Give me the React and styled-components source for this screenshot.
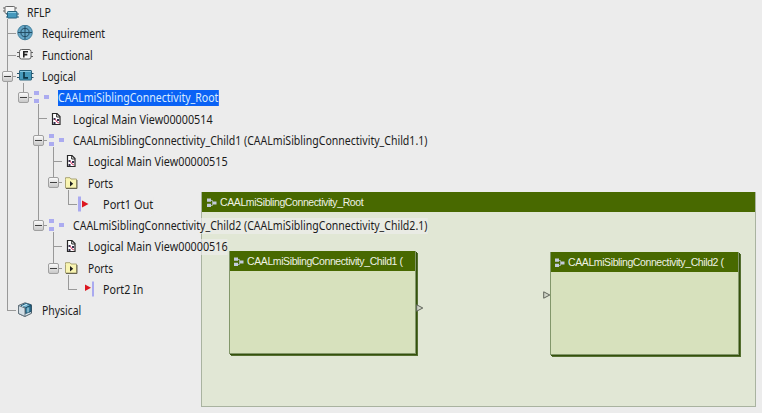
import React from "react";
import styled, { createGlobalStyle } from "styled-components";

const GlobalStyle = createGlobalStyle`
  * { box-sizing: border-box; }
  body { margin: 0; background: #ececec; overflow: hidden; }
`;

const Workspace = styled.main`
  display: grid;
  width: 762px;
  height: 413px;
  overflow: hidden;
  background: #ececec;
  > * { grid-area: 1 / 1; }
`;

/* ---------- specification tree ---------- */

const Tree = styled.nav`
  position: relative;
  z-index: 1;
  padding: 2px 0 0 0;
  font: 12px/16px "Noto Sans", sans-serif;
  color: #1c1c1c;
`;

const Children = styled.ul`
  margin: 0;
  padding: 0 0 0 15.3px;
  list-style: none;
`;

const Node = styled.li`
  position: relative;
  &::before {
    content: "";
    position: absolute;
    left: -8px;
    top: ${(p) => (p.$first ? "-4px" : "-1px")};
    height: ${(p) => (p.$last ? (p.$first ? "15px" : "12px") : "calc(100% + 4px)")};
    border-left: 1px solid #999;
  }
`;

const Row = styled.div`
  position: relative;
  display: flex;
  align-items: center;
  height: 21.3px;
  padding-left: 2px;
`;

const Connector = styled.span`
  position: absolute;
  left: -8px;
  top: 10px;
  width: 9px;
  border-top: 1px solid #999;
`;

const Expander = styled.span`
  position: absolute;
  left: -13px;
  top: 5px;
  display: grid;
  place-items: center;
  width: 11px;
  height: 11px;
  border: 1px solid #a0a0a0;
  border-radius: 2px;
  background: linear-gradient(#fafafa, #c8c8c8);
  &::after {
    content: "";
    width: 7px;
    height: 1px;
    background: #404040;
  }
`;

const IconSlot = styled.span`
  display: flex;
  flex: none;
  width: 25px;
  svg { display: block; }
`;

const Label = styled.span`
  flex: none;
  height: 16px;
  margin-top: 1px;
  white-space: nowrap;
  transform: scaleX(${(p) => p.$scale});
  transform-origin: left center;
  color: ${(p) => (p.$selected ? "#d9ebff" : "#1c1c1c")};
  background: ${(p) => (p.$selected ? "#0a62f5" : "rgba(236,236,236,.65)")};
`;

const Svg = (props) => <svg width="17" height="17" viewBox="0 0 17 17" {...props} />;

const icons = {
  root: (
    <Svg>
      <rect x="3" y="2.5" width="10" height="7" rx="1.2" fill="#f7f7f7" stroke="#666" />
      <path d="M1 4h2M1 7h2M13 4h2" stroke="#666" />
      <rect x="5.5" y="7.5" width="9.5" height="6.5" rx=".7" fill="#4699bd" stroke="#26617c" />
      <path d="M6 8.5h8" stroke="#8dcce2" />
      <path d="M4 10h1.5M4 13h1.5M15 10h2M15 13h2" stroke="#26617c" />
    </Svg>
  ),
  requirement: (
    <Svg>
      <circle cx="8" cy="7.5" r="7.3" fill="#65a5c5" stroke="#427f9c" />
      <circle cx="8" cy="7.5" r="4.1" fill="none" stroke="#244e65" />
      <path d="M8 .5v14M1 7.5h14" stroke="#244e65" />
    </Svg>
  ),
  functional: (
    <Svg>
      <rect x="2.5" y="2.5" width="11.5" height="9.5" rx="2" fill="#f8f8f8" stroke="#606060" />
      <path d="M0 5.5h2M0 9.5h2M14 5.5h2M14 9.5h2" stroke="#606060" />
      <path d="M6.8 10.5V4.8H11M6.8 7.6h3.5" fill="none" stroke="#222" strokeWidth="1.6" />
    </Svg>
  ),
  logical: (
    <Svg>
      <rect x="2.5" y="2.5" width="12" height="9.5" rx=".5" fill="#4699bb" stroke="#2b647f" />
      <path d="M3 3.5h11" stroke="#86c4dc" />
      <path d="M0 5.5h2M0 9.5h2M14.5 5.5h2M14.5 9.5h2" stroke="#255168" />
      <path d="M7 4v5.8h4" fill="none" stroke="#0c3547" strokeWidth="1.7" />
    </Svg>
  ),
  component: (
    <Svg>
      <path d="M1 2h5v4H1zM1 10h5v4H1zM11 6h5v4h-5z" fill="#ababf0" />
    </Svg>
  ),
  document: (
    <Svg>
      <path d="M4.5 2.5h4.5l3 3v8h-7.5z" fill="#fff" stroke="#282828" strokeWidth="1.2" />
      <path d="M8.7 2.5V6H12" fill="none" stroke="#282828" />
      <path d="M5.5 7h2v2h-2zM9 8h2v2H9zM5.5 11h2v2h-2z" fill="#343050" />
      <path d="M7 8l2 3 2 1" fill="none" stroke="#d23b65" />
    </Svg>
  ),
  folder: (
    <Svg>
      <path d="M2.5 4.5V2.7h4.5l1 1.3h5.5v9h-11z" fill="#f9f5b2" stroke="#aaa474" />
      <path d="M14 5v8.5H3" fill="none" stroke="#68654f" />
      <path d="M7 6l3.2 2.7L7 11.4z" fill="#202020" />
    </Svg>
  ),
  portOut: (
    <Svg>
      <path d="M0 .5h3v15H0z" fill="#aaaaf0" />
      <path d="M4 4.5l6.5 3.5L4 11.5z" fill="#dc1620" />
    </Svg>
  ),
  portIn: (
    <Svg>
      <path d="M7 3.5l6 3.3-6 3.3z" fill="#dc1620" />
      <path d="M14 .5h2v15h-2z" fill="#aaaaf0" />
    </Svg>
  ),
  physical: (
    <Svg>
      <path d="M1.5 3.5L8 .8l6.5 2v8.5L8 14.5l-6.5-3z" fill="#dbe8ef" stroke="#53616b" />
      <path d="M4 3.7L8.5 1.5 14 3 8.8 5.8z" fill="#72b2cf" stroke="#245b78" />
      <path d="M8.5 6L14 3.5v6l-5.5 2z" fill="#367f9f" stroke="#194b66" />
      <path d="M1.5 3.5v8L8 14.5V6z" fill="#d3dee5" stroke="#65747e" />
      <path d="M5 4.5l5.3-2.3M11 5.5v5" stroke="#c4e5ef" />
    </Svg>
  ),
};

const mainView = (n) => ({ icon: "document", label: `Logical Main View00000${n}`, scale: 0.9 });
const ports = (port) => ({ icon: "folder", label: "Ports", scale: 0.85, children: [port] });

const child = (n, view, port) => ({
  icon: "component",
  label: `CAALmiSiblingConnectivity_Child${n} (CAALmiSiblingConnectivity_Child${n}.1)`,
  scale: 0.878,
  children: [mainView(view), ports(port)],
});

const spec = {
  icon: "root", label: "RFLP", scale: 0.88,
  children: [
    { icon: "requirement", label: "Requirement", scale: 0.86 },
    { icon: "functional", label: "Functional", scale: 0.864 },
    {
      icon: "logical", label: "Logical", scale: 0.855,
      children: [{
        icon: "component", label: "CAALmiSiblingConnectivity_Root", scale: 0.879, selected: true,
        children: [
          mainView(514),
          child(1, 515, { icon: "portOut", label: "Port1 Out", scale: 0.916 }),
          child(2, 516, { icon: "portIn", label: "Port2 In", scale: 0.89 }),
        ],
      }],
    },
    { icon: "physical", label: "Physical", scale: 0.867 },
  ],
};

function TreeRow({ item, root }) {
  return (
    <Row>
      {!root && <Connector />}
      {!root && item.children && <Expander />}
      <IconSlot>{icons[item.icon]}</IconSlot>
      <Label $selected={item.selected} $scale={item.scale}>{item.label}</Label>
    </Row>
  );
}

function TreeChildren({ items }) {
  return (
    <Children>
      {items.map((item, i) => (
        <Node key={item.label} $first={i === 0} $last={i === items.length - 1}>
          <TreeRow item={item} />
          {item.children && <TreeChildren items={item.children} />}
        </Node>
      ))}
    </Children>
  );
}

/* ---------- block diagram ---------- */

const Diagram = styled.section`
  position: relative;
  width: 555px;
  height: 215px;
  margin: 192px 0 0 201px;
  border: 1px solid #a9b3a0;
  border-top: 0;
  background: #e1e7d5;
  font: 10.5px/18px "Liberation Sans", sans-serif;
`;

const BlockHeader = styled.header`
  display: flex;
  align-items: center;
  gap: 2px;
  height: 20px;
  padding: 0 0 1px 4px;
  background: #486900;
  color: #eef2e5;
  white-space: nowrap;
  letter-spacing: -0.4px;
  svg { flex: none; margin-top: 2px; }
`;

const Block = styled.article`
  position: absolute;
  left: ${(p) => p.$x}px;
  top: ${(p) => p.$y}px;
  width: ${(p) => p.$w}px;
  height: 103px;
  border: 1px solid #82976a;
  border-top: 0;
  background: #d7e1bd;
  box-shadow: 1px 1px 0 #35510c, 2px 2px 0 #546f30;
  > header { padding-left: 3px; }
`;

const PortMark = styled.svg`
  position: absolute;
  left: ${(p) => p.$x}px;
  top: ${(p) => p.$y}px;
`;

const Glyph = () => (
  <svg width="12" height="12" viewBox="0 0 12 12">
    <path d="M3 3.5h3.5v5H3M6.5 6H9" fill="none" stroke="#9fb09c" />
    <path d="M1 1.5h4v3.2H1zM1 6.8h4V10H1zM7 4.5h3.5v3H7z" fill="#c3cbdc" />
  </svg>
);

const Port = ({ x, y }) => (
  <PortMark $x={x} $y={y} width="8" height="8" viewBox="0 0 8 8">
    <path d="M.7 .8L6.8 4 .7 7.2z" fill="#ced3c6" stroke="#60655b" />
  </PortMark>
);

export default function App() {
  return (
    <>
      <GlobalStyle />
      <Workspace>
        <Diagram>
          <BlockHeader><Glyph />CAALmiSiblingConnectivity_Root</BlockHeader>
          <Block $x={27} $y={59} $w={187}>
            <BlockHeader><Glyph />CAALmiSiblingConnectivity_Child1 (</BlockHeader>
          </Block>
          <Block $x={348} $y={60} $w={189}>
            <BlockHeader><Glyph />CAALmiSiblingConnectivity_Child2 (</BlockHeader>
          </Block>
          <Port x={214} y={112} />
          <Port x={341} y={99} />
        </Diagram>
        <Tree>
          <TreeRow item={spec} root />
          <TreeChildren items={spec.children} />
        </Tree>
      </Workspace>
    </>
  );
}
